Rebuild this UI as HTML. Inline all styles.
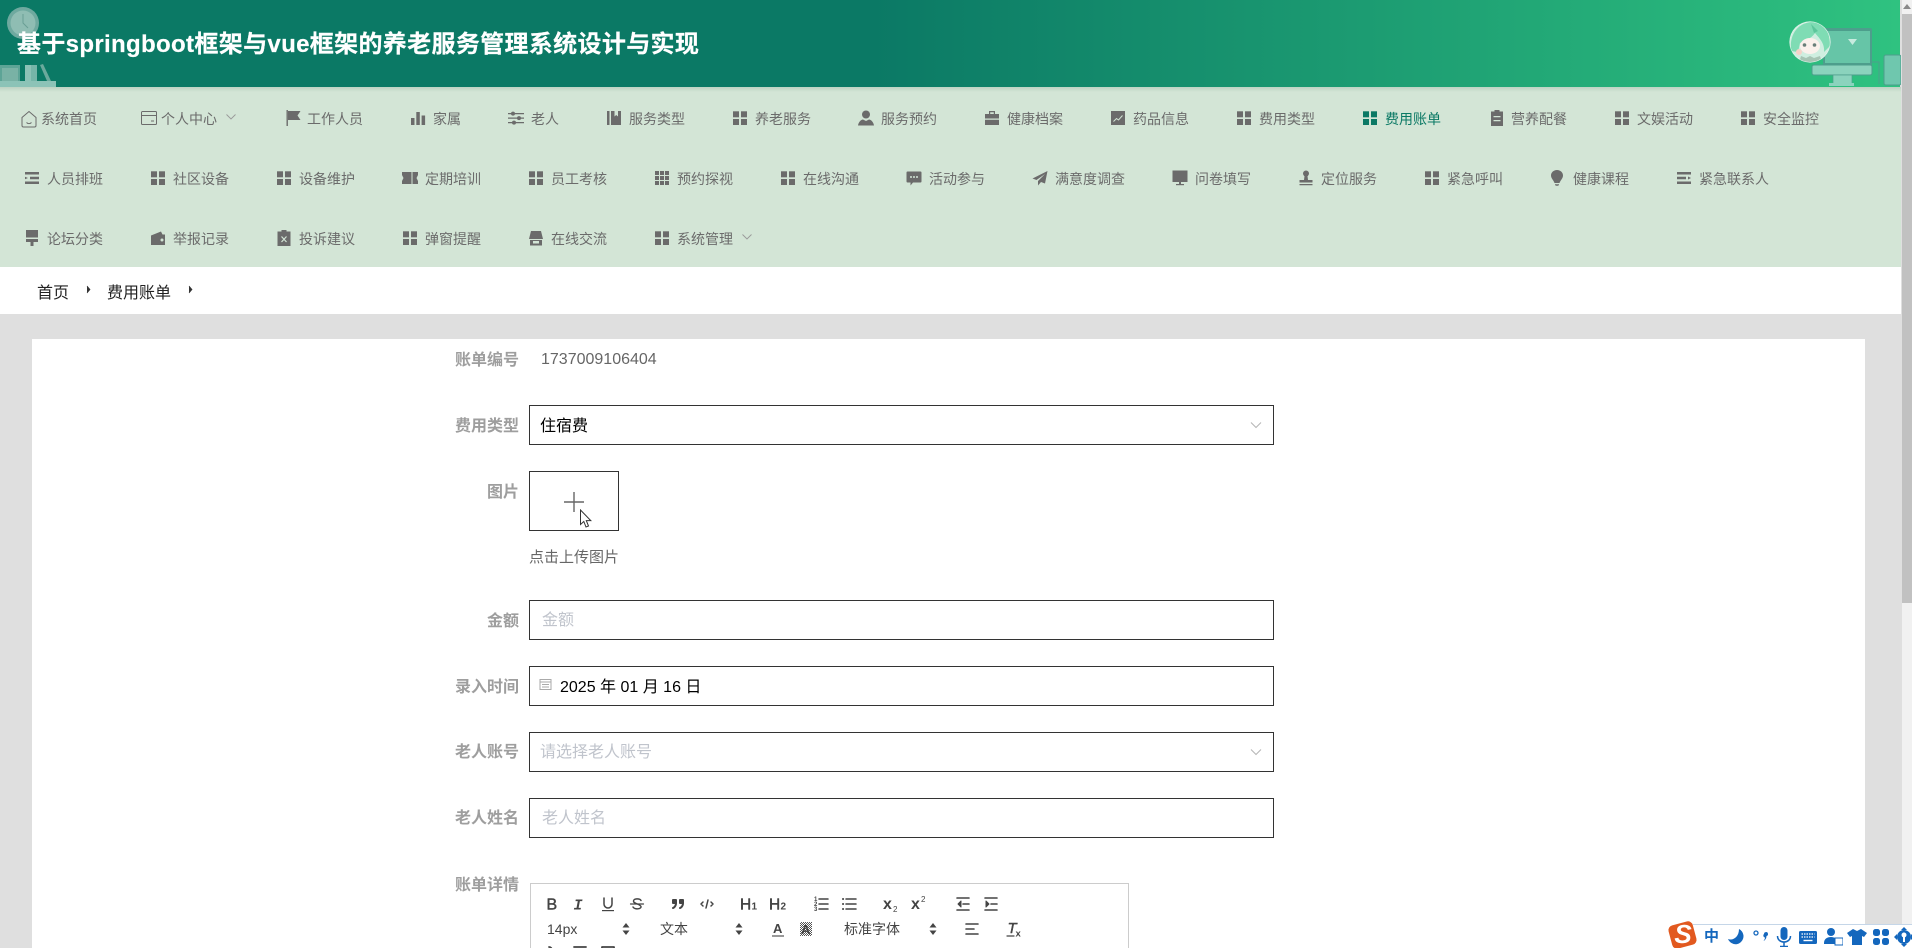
<!DOCTYPE html>
<html lang="zh-CN">
<head>
<meta charset="utf-8">
<title>费用账单</title>
<style>
*{box-sizing:border-box;margin:0;padding:0}
html,body{width:1912px;height:948px;overflow:hidden;background:#dfdfdf}
body{position:relative;font-family:"Liberation Sans","Noto Sans CJK SC",sans-serif;color:#666}
.a{position:absolute}
#hd{left:0;top:0;width:1900px;height:87px;background:linear-gradient(90deg,#0b7965 0,#0b7965 46%,#2fc280 100%)}
#title{left:17px;top:29px;font-size:24px;line-height:32px;font-weight:700;color:#fff;white-space:nowrap;letter-spacing:.34px;-webkit-text-stroke:.2px #fff}
#nav{left:0;top:87px;width:1901px;height:180px;background:linear-gradient(180deg,#bdd3c3 0,#d3e5d6 5px,#d3e5d6 100%)}
.t{position:absolute;font-size:14px;line-height:20px;height:20px;white-space:nowrap;color:#6b6b6b;transform:translateY(1px)}
.i{position:absolute;width:16px;height:16px;fill:#6b6b6b;color:#6b6b6b}
.on{color:#0b7965;fill:#0b7965}
#bc{left:0;top:267px;width:1901px;height:47px;background:#fff}
.b{position:absolute;top:283px;font-size:16px;line-height:22px;color:#222;white-space:nowrap}
#card{left:32px;top:339px;width:1833px;height:609px;background:#fff}
.l{position:absolute;width:100px;left:419px;text-align:right;font-size:16px;line-height:24px;color:#9e9e9e;font-weight:700;white-space:nowrap;margin-top:2px}
.f{position:absolute;left:529px;width:745px;height:40px;border:1px solid #333;background:#fff;font-size:16px;line-height:42px;padding-left:10px;color:#000;white-space:nowrap}
.f.ph{line-height:40px}
.ph{color:#c0c4cc}
.ar{position:absolute;left:1250px;width:12px;height:8px;fill:none;stroke:#b5b5b5;stroke-width:1}
#ed{left:530px;top:883px;width:599px;height:70px;border:1px solid #ccc;background:#fff}
.q{position:absolute;width:18px;height:18px;fill:none;stroke:#444;stroke-width:2;stroke-linecap:round;stroke-linejoin:round}
.q text{stroke:none;fill:#444;font-family:"Liberation Sans",sans-serif}
.q text.m2{stroke:#444;stroke-width:.45px}
.q text.mono{font-family:"Liberation Mono",monospace}
.qt{position:absolute;top:920px;font-size:14px;line-height:18px;color:#444;white-space:nowrap}
.pk{position:absolute;top:923px;width:8px;height:12px;fill:#444}
#st{left:1902px;top:0;width:10px;height:948px;background:#f1f1f1}
#th{left:1902px;top:14px;width:10px;height:589px;background:#c1c1c1}
#ime{left:1693px;top:924px;width:219px;height:24px;background:#fff;border-top:1px solid #c5d6e8}
.m{position:absolute;width:20px;height:20px;top:927px;fill:#1467bd}
</style>
</head>
<body>
<svg width="0" height="0" style="position:absolute">
<defs>
<pattern id="hatch" width="2" height="2" patternUnits="userSpaceOnUse"><rect width="1" height="1" fill="#555"/><rect x="1" y="1" width="1" height="1" fill="#555"/></pattern>
<symbol id="grid" viewBox="0 0 16 16"><rect x="1" y="1.3" width="6" height="6"/><rect x="9" y="1.3" width="6" height="6"/><rect x="1" y="9" width="6" height="6"/><rect x="9" y="9" width="6" height="6"/></symbol>
<symbol id="home" viewBox="0 0 18 18"><path d="M9 1.500L16 7.500V15.500a1.500 1.500 0 0 1-1.500 1.500H3.500A1.500 1.500 0 0 1 2 15.500V7.500Z M6.500 12.500c1.500 1.500 3.500 1.500 5 0" fill="none" stroke="#6b6b6b" stroke-width="1"/></symbol>
<symbol id="wal" viewBox="0 0 18 18"><path d="M2.500 2.500h13a1 1 0 0 1 1 1v11a1 1 0 0 1-1 1h-13a1 1 0 0 1-1-1v-11a1 1 0 0 1 1-1ZM1.500 6.500h15M11 12h3" fill="none" stroke="#6b6b6b" stroke-width="1"/></symbol>
<symbol id="flag" viewBox="0 0 16 16"><path d="M1.500 0h1.400v16H1.500ZM3 1h12.500l-3 4.500 3 4.500H3Z"/></symbol>
<symbol id="bars" viewBox="0 0 16 16"><rect x="1" y="8" width="3.500" height="7"/><rect x="6.300" y="2" width="3.500" height="13"/><rect x="11.600" y="5.500" width="3.500" height="9.500"/></symbol>
<symbol id="sl" viewBox="0 0 16 16"><path d="M0 3h16v1.300H0ZM0 7.500h16v1.300H0ZM0 12h16v1.300H0Z"/><circle cx="5" cy="3.600" r="2"/><circle cx="11" cy="8.100" r="2"/><circle cx="6" cy="12.600" r="2"/></symbol>
<symbol id="bk" viewBox="0 0 16 16"><path d="M1 1h2.500v14H1ZM5 1h10v14H5Z"/><path d="M8.500 1h3.500v5.500L10.200 5 8.500 6.500Z" fill="#d3e5d6"/></symbol>
<symbol id="usr" viewBox="0 0 16 16"><circle cx="8" cy="4.500" r="4"/><path d="M0 15.500c.5-3.500 3-6 5-6l3 1.500 3-1.500c2 0 4.500 2.500 5 6Z"/></symbol>
<symbol id="bag" viewBox="0 0 16 16"><path d="M5 1h6v3H9.800V2.200H6.200V4H5ZM1 4h14v4.500H1ZM1 9.800h14V15H1Z"/></symbol>
<symbol id="chart" viewBox="0 0 16 16"><rect x="1" y="1" width="14" height="14"/><path d="M3.500 11.500l3-3 2 1.500 4-4.500" fill="none" stroke="#d3e5d6" stroke-width="1"/></symbol>
<symbol id="clip" viewBox="0 0 16 16"><path d="M5.500 0h5v1.500H14V16H2V1.500h3.500Z"/><path d="M4.500 6h7v1.300h-7ZM4.500 10h7v1.300h-7Z" fill="#d3e5d6"/></symbol>
<symbol id="list" viewBox="0 0 16 16"><path d="M1 2h14v2.500H1ZM6 6.800h9v2.500H6ZM1 11.500h14V14H1ZM1 6.800l3 1.200-3 1.300Z"/></symbol>
<symbol id="tick" viewBox="0 0 16 16"><path d="M0 2h16v3l-1.500 3 1.500 3v3H0v-3l1.500-3L0 5Z"/><path d="M10 2v12" stroke="#d3e5d6" stroke-width="1"/></symbol>
<symbol id="g9" viewBox="0 0 16 16"><rect x="1" y="1" width="4" height="4"/><rect x="6" y="1" width="4" height="4"/><rect x="11" y="1" width="4" height="4"/><rect x="1" y="6" width="4" height="4"/><rect x="6" y="6" width="4" height="4"/><rect x="11" y="6" width="4" height="4"/><rect x="1" y="11" width="4" height="4"/><rect x="6" y="11" width="4" height="4"/><rect x="11" y="11" width="4" height="4"/></symbol>
<symbol id="chat" viewBox="0 0 16 16"><path d="M1.500 1.500h13a1 1 0 0 1 1 1v9a1 1 0 0 1-1 1H7l-2.500 3v-3H1.500a1 1 0 0 1-1-1v-9a1 1 0 0 1 1-1Z"/><circle cx="5" cy="7" r="1" fill="#d3e5d6"/><circle cx="8" cy="7" r="1" fill="#d3e5d6"/><circle cx="11" cy="7" r="1" fill="#d3e5d6"/></symbol>
<symbol id="pl" viewBox="0 0 16 16"><path d="M15.500 1L.5 8.500l4 1.500L13 4 6 11v4.500l3-3.500 4 1.500Z"/></symbol>
<symbol id="mon" viewBox="0 0 16 16"><rect x=".5" y=".5" width="15" height="11.500"/><rect x="7" y="12" width="2" height="2"/><rect x="4" y="14" width="8" height="1.200"/></symbol>
<symbol id="stamp" viewBox="0 0 16 16"><circle cx="8" cy="3.500" r="3"/><path d="M6.500 6h3l.5 4h4.500v2.500h-13V10H6ZM1.500 14h13v1.300h-13Z"/></symbol>
<symbol id="bulb" viewBox="0 0 16 16"><path d="M8 0c3.500 0 6 2.500 6 5.500 0 3-2.500 4.500-3.500 7.500h-5C4.500 10 2 8.500 2 5.500 2 2.500 4.500 0 8 0ZM6 14h4v.7H6ZM6.500 15.200h3v.8h-3Z"/></symbol>
<symbol id="unf" viewBox="0 0 16 16"><path d="M1 2h14v2.500H1ZM1 6.800h9v2.500H1ZM1 11.500h14V14H1ZM15 8l-3-1.500v3Z"/></symbol>
<symbol id="brush" viewBox="0 0 16 16"><path d="M2 0h12v7.500H2ZM2 9h12v3H9.500v4h-3v-4H2Z"/></symbol>
<symbol id="wf" viewBox="0 0 16 16"><path d="M1 5.500L11 1.500 12.500 4.500H15V15H1Z"/><circle cx="12" cy="10" r="1.500" fill="#d3e5d6"/></symbol>
<symbol id="cx" viewBox="0 0 16 16"><path d="M5.500 0h5v1.500H14.500V16h-13V1.500h4Z"/><path d="M5.500 6.500l5 5.500M10.500 6.500l-5 5.500" stroke="#d3e5d6" stroke-width="1.200" fill="none"/></symbol>
<symbol id="shop" viewBox="0 0 16 16"><path d="M3 1h10l2 8H1Z"/><path d="M2 10h12v5.500H2Z"/><path d="M5 11h6v2.500H5Z" fill="#d3e5d6"/></symbol>
<symbol id="dn" viewBox="0 0 12 8"><path d="M1.500 1.500L6 6 10.500 1.500" fill="none" stroke="#999" stroke-width=".9"/></symbol>
<symbol id="ud" viewBox="0 0 8 12"><path d="M4 0l3.500 4.500H.5ZM4 12L.5 7.500h7Z"/></symbol>
</defs>
</svg>

<div id="hd" class="a"></div>
<svg class="a" style="left:0;top:0" width="70" height="87" viewBox="0 0 70 87">
<circle cx="23" cy="23" r="16" fill="#6fa99f"/><circle cx="23" cy="23" r="12.500" fill="#8fbdb3"/>
<path d="M23 14v9l5 5" stroke="#6a9f95" fill="none"/>
<rect x="0" y="65" width="20" height="16" fill="#5da496"/><rect x="2" y="68" width="16" height="13" fill="#79b2a5"/>
<rect x="25" y="65" width="6" height="16" fill="#8cc2b6"/><rect x="31" y="65" width="6" height="16" fill="#75b5a8"/>
<path d="M40 65l3-1 8 17h-4Z" fill="#6ba99c"/>
<rect x="0" y="81" width="56" height="6" fill="#8cc3b7"/>
</svg>
<div id="title" class="a">基于springboot框架与vue框架的养老服务管理系统设计与实现</div>
<svg class="a" style="left:1805px;top:20px" width="96" height="67" viewBox="1805 20 96 67">
<rect x="1823" y="28" width="49" height="38" rx="2" fill="#4d9e8c"/>
<rect x="1825" y="31" width="45" height="32" fill="#66c5a7"/>
<path d="M1848 39h9l-4.500 6Z" fill="#c7ebdf"/>
<rect x="1812" y="65" width="60" height="10" rx="2" fill="#8bd3bd" stroke="#4d9e8c"/>
<rect x="1833" y="75" width="19" height="9" fill="#8bd3bd" stroke="#4d9e8c" stroke-width=".7"/>
<rect x="1829" y="83" width="25" height="3" fill="#8bd3bd"/>
<path d="M1872 62h7v22" fill="none" stroke="#4d9e8c"/>
<rect x="1884" y="55" width="17" height="30" rx="2" fill="#6fc7ae" stroke="#4d9e8c"/>
</svg>
<svg class="a" style="left:1789px;top:21px" width="42" height="42" viewBox="0 0 42 42">
<defs><clipPath id="av"><circle cx="21" cy="21" r="20"/></clipPath></defs>
<circle cx="21" cy="21" r="20.600" fill="#e8f6ef"/>
<g clip-path="url(#av)">
<rect width="42" height="42" fill="#cfeee0"/>
<path d="M2 30C0 10 12 1 24 1s17 10 17 24l-6 6c1-9-5-14-9-19-4 6-11 8-15 10l-2 9Z" fill="#7fdcb4"/>
<path d="M22 3l3 9 4-2Z" fill="#5cc69b"/>
<ellipse cx="21" cy="25" rx="10" ry="8" fill="#fbf1ec"/>
<circle cx="15.500" cy="24" r="1.800" fill="#6a7f7a"/><circle cx="25.500" cy="24" r="1.800" fill="#6a7f7a"/>
<path d="M12 35l5 2 4-2 4 2 6-2 2 7H10Z" fill="#a7c4b4"/>
<circle cx="10" cy="31" r="3" fill="#f5d2c8"/>
</g>
</svg>

<div id="nav" class="a"></div>

<!-- row 1 -->
<svg class="i" style="left:20px;top:110px;width:18px;height:18px"><use href="#home"/></svg><span class="t" style="left:41px;top:108px">系统首页</span>
<svg class="i" style="left:140px;top:109px;width:18px;height:18px"><use href="#wal"/></svg><span class="t" style="left:161px;top:108px">个人中心</span><svg class="a" style="left:225px;top:113px" width="12" height="8"><use href="#dn"/></svg>
<svg class="i" style="left:285px;top:110px"><use href="#flag"/></svg><span class="t" style="left:307px;top:108px">工作人员</span>
<svg class="i" style="left:410px;top:110px"><use href="#bars"/></svg><span class="t" style="left:433px;top:108px">家属</span>
<svg class="i" style="left:508px;top:110px"><use href="#sl"/></svg><span class="t" style="left:531px;top:108px">老人</span>
<svg class="i" style="left:606px;top:110px"><use href="#bk"/></svg><span class="t" style="left:629px;top:108px">服务类型</span>
<svg class="i" style="left:732px;top:110px"><use href="#grid"/></svg><span class="t" style="left:755px;top:108px">养老服务</span>
<svg class="i" style="left:858px;top:110px"><use href="#usr"/></svg><span class="t" style="left:881px;top:108px">服务预约</span>
<svg class="i" style="left:984px;top:110px"><use href="#bag"/></svg><span class="t" style="left:1007px;top:108px">健康档案</span>
<svg class="i" style="left:1110px;top:110px"><use href="#chart"/></svg><span class="t" style="left:1133px;top:108px">药品信息</span>
<svg class="i" style="left:1236px;top:110px"><use href="#grid"/></svg><span class="t" style="left:1259px;top:108px">费用类型</span>
<svg class="i on" style="left:1362px;top:110px"><use href="#grid"/></svg><span class="t on" style="left:1385px;top:108px">费用账单</span>
<svg class="i" style="left:1489px;top:110px"><use href="#clip"/></svg><span class="t" style="left:1511px;top:108px">营养配餐</span>
<svg class="i" style="left:1614px;top:110px"><use href="#grid"/></svg><span class="t" style="left:1637px;top:108px">文娱活动</span>
<svg class="i" style="left:1740px;top:110px"><use href="#grid"/></svg><span class="t" style="left:1763px;top:108px">安全监控</span>

<!-- row 2 -->
<svg class="i" style="left:24px;top:170px"><use href="#list"/></svg><span class="t" style="left:47px;top:168px">人员排班</span>
<svg class="i" style="left:150px;top:170px"><use href="#grid"/></svg><span class="t" style="left:173px;top:168px">社区设备</span>
<svg class="i" style="left:276px;top:170px"><use href="#grid"/></svg><span class="t" style="left:299px;top:168px">设备维护</span>
<svg class="i" style="left:402px;top:170px"><use href="#tick"/></svg><span class="t" style="left:425px;top:168px">定期培训</span>
<svg class="i" style="left:528px;top:170px"><use href="#grid"/></svg><span class="t" style="left:551px;top:168px">员工考核</span>
<svg class="i" style="left:654px;top:170px"><use href="#g9"/></svg><span class="t" style="left:677px;top:168px">预约探视</span>
<svg class="i" style="left:780px;top:170px"><use href="#grid"/></svg><span class="t" style="left:803px;top:168px">在线沟通</span>
<svg class="i" style="left:906px;top:170px"><use href="#chat"/></svg><span class="t" style="left:929px;top:168px">活动参与</span>
<svg class="i" style="left:1032px;top:170px"><use href="#pl"/></svg><span class="t" style="left:1055px;top:168px">满意度调查</span>
<svg class="i" style="left:1172px;top:170px"><use href="#mon"/></svg><span class="t" style="left:1195px;top:168px">问卷填写</span>
<svg class="i" style="left:1298px;top:170px"><use href="#stamp"/></svg><span class="t" style="left:1321px;top:168px">定位服务</span>
<svg class="i" style="left:1424px;top:170px"><use href="#grid"/></svg><span class="t" style="left:1447px;top:168px">紧急呼叫</span>
<svg class="i" style="left:1549px;top:170px"><use href="#bulb"/></svg><span class="t" style="left:1573px;top:168px">健康课程</span>
<svg class="i" style="left:1676px;top:170px"><use href="#unf"/></svg><span class="t" style="left:1699px;top:168px">紧急联系人</span>

<!-- row 3 -->
<svg class="i" style="left:24px;top:230px"><use href="#brush"/></svg><span class="t" style="left:47px;top:228px">论坛分类</span>
<svg class="i" style="left:150px;top:230px"><use href="#wf"/></svg><span class="t" style="left:173px;top:228px">举报记录</span>
<svg class="i" style="left:276px;top:230px"><use href="#cx"/></svg><span class="t" style="left:299px;top:228px">投诉建议</span>
<svg class="i" style="left:402px;top:230px"><use href="#grid"/></svg><span class="t" style="left:425px;top:228px">弹窗提醒</span>
<svg class="i" style="left:528px;top:230px"><use href="#shop"/></svg><span class="t" style="left:551px;top:228px">在线交流</span>
<svg class="i" style="left:654px;top:230px"><use href="#grid"/></svg><span class="t" style="left:677px;top:228px">系统管理</span><svg class="a" style="left:741px;top:233px" width="12" height="8"><use href="#dn"/></svg>

<div id="bc" class="a"></div>
<span class="b" style="left:37px">首页</span>
<svg class="a" style="left:86px;top:284px" width="6" height="12"><path d="M1 2L4 5.500 1 9" fill="#333" stroke="#333" stroke-width=".7"/></svg>
<span class="b" style="left:107px">费用账单</span>
<svg class="a" style="left:188px;top:284px" width="6" height="12"><path d="M1 2L4 5.500 1 9" fill="#333" stroke="#333" stroke-width=".7"/></svg>

<div id="card" class="a"></div>

<span class="l" style="top:347px">账单编号</span>
<span class="a" style="left:541px;top:348px;font-size:16px;line-height:24px;color:#666">1737009106404</span>

<span class="l" style="top:413px">费用类型</span>
<div class="f" style="top:405px">住宿费</div>
<svg class="ar" style="top:421px" viewBox="0 0 12 8"><path d="M1 1.500L6 6.500 11 1.500"/></svg>

<span class="l" style="top:479px">图片</span>
<div class="a" style="left:529px;top:471px;width:90px;height:60px;border:1px solid #333;background:#fff"></div>
<svg class="a" style="left:564px;top:492px" width="20" height="20"><path d="M10 0v20M0 10h20" stroke="#666" stroke-width="1.400"/></svg>
<svg class="a" style="left:579px;top:509px" width="14" height="20" viewBox="0 0 14 20"><path d="M1.500 1v14.500l3.300-3 2.200 5.500 2.500-1-2.200-5.400h4.500Z" fill="#fff" stroke="#333" stroke-width="1"/></svg>
<span class="a" style="left:529px;top:547px;font-size:15px;line-height:22px;color:#666;white-space:nowrap">点击上传图片</span>

<span class="l" style="top:608px">金额</span>
<div class="f ph" style="top:600px;padding-left:12px">金额</div>

<span class="l" style="top:674px">录入时间</span>
<div class="f" style="top:666px;padding-left:30px">2025 年 01 月 16 日</div>
<svg class="a" style="left:539px;top:678px" width="13" height="13" viewBox="0 0 13 13"><path d="M1 1.500h11v10H1ZM1 4h11M3 6.500h7M3 9h7" fill="none" stroke="#aaa" stroke-width="1"/></svg>

<span class="l" style="top:739px">老人账号</span>
<div class="f ph" style="top:732px">请选择老人账号</div>
<svg class="ar" style="top:748px" viewBox="0 0 12 8"><path d="M1 1.500L6 6.500 11 1.500"/></svg>

<span class="l" style="top:805px">老人姓名</span>
<div class="f ph" style="top:798px;padding-left:12px">老人姓名</div>

<span class="l" style="top:872px">账单详情</span>
<div id="ed" class="a"></div>

<!-- toolbar row 1 -->
<svg class="q" style="left:543px;top:895px" viewBox="0 0 18 18"><text x="3.500" y="14.500" font-size="16" font-weight="400" class="m2">B</text></svg>
<svg class="q" style="left:570px;top:895px" viewBox="0 0 18 18"><text x="3.500" y="14.500" font-size="15" font-weight="700" font-style="italic" class="mono">I</text></svg>
<svg class="q" style="left:599px;top:895px" viewBox="0 0 18 18"><path d="M5 3v6a4 4 0 0 0 8 0V3" stroke-width="1.500"/><rect x="3" y="15" width="12" height="1.200" fill="#444" stroke="none"/></svg>
<svg class="q" style="left:628px;top:895px" viewBox="0 0 18 18"><path d="M13 5.500C12 3.500 6 3 5.500 6c-.4 2.500 6.500 3 7.500 5.500.6 2.500-6 3.500-8 .5" stroke-width="1.400"/><path d="M2.500 9h13" stroke-width="1.200"/></svg>
<svg class="q" style="left:669px;top:895px" viewBox="0 0 18 18"><rect x="4" y="5" width="3" height="3" fill="#444"/><rect x="11" y="5" width="3" height="3" fill="#444"/><path d="M7 8c0 4-3 5-3 5M14 8c0 4-3 5-3 5"/></svg>
<svg class="q" style="left:698px;top:895px" viewBox="0 0 18 18"><path d="M5 7L3 9l2 2M13 7l2 2-2 2M10 5L8 13" stroke-width="1.500"/></svg>
<svg class="q" style="left:740px;top:895px" viewBox="0 0 18 18"><text x="0" y="14.500" font-size="15.500" class="m2">H</text><text x="11.500" y="14.500" font-size="10" font-weight="700">1</text></svg>
<svg class="q" style="left:769px;top:895px" viewBox="0 0 18 18"><text x="0" y="14.500" font-size="15.500" class="m2">H</text><text x="11.500" y="14.500" font-size="10" font-weight="700">2</text></svg>
<svg class="q" style="left:812px;top:895px" viewBox="0 0 18 18"><path d="M7 4h9M7 9h9M7 14h9" stroke-width="1.500"/><text x="2" y="6" font-size="6" font-weight="700">1</text><text x="2" y="11" font-size="6" font-weight="700">2</text><text x="2" y="16" font-size="6" font-weight="700">3</text></svg>
<svg class="q" style="left:840px;top:895px" viewBox="0 0 18 18"><path d="M6 4h10M6 9h10M6 14h10" stroke-width="1.500"/><path d="M3 4h.1M3 9h.1M3 14h.1"/></svg>
<svg class="q" style="left:882px;top:895px" viewBox="0 0 18 18"><text x="1" y="14" font-size="16" font-weight="700">x</text><text x="11" y="17" font-size="8">2</text></svg>
<svg class="q" style="left:910px;top:895px" viewBox="0 0 18 18"><text x="1" y="14" font-size="16" font-weight="700">x</text><text x="11" y="7" font-size="8">2</text></svg>
<svg class="q" style="left:954px;top:895px" viewBox="0 0 18 18"><path d="M3 3h12M9 9h6M3 15h12" stroke-width="1.600"/><path d="M7 6L4 9l3 3Z" fill="#444" stroke-width="1"/></svg>
<svg class="q" style="left:982px;top:895px" viewBox="0 0 18 18"><path d="M3 3h12M9 9h6M3 15h12" stroke-width="1.600"/><path d="M4 6l3 3-3 3Z" fill="#444" stroke-width="1"/></svg>

<!-- toolbar row 2 -->
<span class="qt" style="left:547px">14px</span>
<svg class="pk" style="left:622px" viewBox="0 0 8 12"><use href="#ud"/></svg>
<span class="qt" style="left:660px">文本</span>
<svg class="pk" style="left:735px" viewBox="0 0 8 12"><use href="#ud"/></svg>
<svg class="q" style="left:769px;top:920px" viewBox="0 0 18 18"><text x="4" y="13" font-size="13" font-weight="700">A</text><rect x="3" y="15" width="12" height="2" fill="#999" stroke="none"/></svg>
<svg class="q" style="left:797px;top:920px" viewBox="0 0 18 18"><rect x="3" y="2" width="12" height="14" fill="url(#hatch)" stroke="none"/><text x="4" y="14" font-size="13" font-weight="700">A</text></svg>
<span class="qt" style="left:844px">标准字体</span>
<svg class="pk" style="left:929px" viewBox="0 0 8 12"><use href="#ud"/></svg>
<svg class="q" style="left:963px;top:920px" viewBox="0 0 18 18"><path d="M3 4h12M3 9h8M3 14h12" stroke-width="1.600"/></svg>
<svg class="q" style="left:1005px;top:920px" viewBox="0 0 18 18"><text x="2.500" y="13" font-size="15" font-style="italic" class="m2">T</text><text x="10.500" y="16.500" font-size="9.500" font-weight="700">x</text><path d="M2 16h7" stroke-width="1.200"/></svg>

<!-- toolbar row 3 -->
<svg class="q" style="left:541px;top:944px" viewBox="0 0 18 18"><path d="M8 3a3 3 0 0 1 3 3v2" stroke-width="1.800"/></svg>
<svg class="q" style="left:571px;top:944px" viewBox="0 0 18 18"><path d="M3 3h12" stroke-width="1.800"/></svg>
<svg class="q" style="left:599px;top:944px" viewBox="0 0 18 18"><path d="M3 3h12v12H3Z" stroke-width="1.800"/></svg>

<div id="st" class="a"></div>
<div id="th" class="a"></div>
<svg class="a" style="left:1902px;top:3px" width="10" height="8"><path d="M5 1l4 5H1Z" fill="#8a8a8a"/></svg>

<!-- IME bar -->
<div id="ime" class="a"></div>
<div class="a" style="left:1670px;top:923px;width:25px;height:24px;background:#e2591f;border-radius:5px;transform:rotate(-15deg)"></div>
<span class="a" style="left:1672px;top:919px;width:22px;text-align:center;font-size:26px;line-height:30px;font-weight:700;font-style:italic;color:#fff">S</span>
<span class="a" style="left:1704px;top:927px;font-size:15px;line-height:20px;font-weight:700;color:#1467bd">中</span>
<svg class="m" style="left:1726px" viewBox="0 0 20 20"><path d="M13 2a8 8 0 1 1-11 10c5 2 11-2 11-10Z"/></svg>
<svg class="m" style="left:1751px" viewBox="0 0 20 20"><circle cx="5" cy="6" r="2" fill="none" stroke="#1467bd" stroke-width="1.300"/><path d="M13 7a2 2 0 1 1 2.500 2c0 2-1 4-3 5 1-1.500 1.500-2.500 1.500-3.500A2 2 0 0 1 13 7Z"/></svg>
<svg class="m" style="left:1774px" viewBox="0 0 20 20"><rect x="6.500" y="0" width="7" height="13" rx="3.500"/><path d="M3.500 9c0 8 13 8 13 0M10 15v4M6 19.500h8" fill="none" stroke="#1467bd" stroke-width="1.500"/></svg>
<svg class="m" style="left:1798px" viewBox="0 0 20 20"><rect x="1" y="4" width="18" height="13" rx="1.500"/><path d="M3.500 7h13M3.500 10h13" stroke="#fff" stroke-width="1.300" stroke-dasharray="1.500 1"/><path d="M5.500 13.500h9" stroke="#fff" stroke-width="1.400"/></svg>
<svg class="m" style="left:1823px" viewBox="0 0 20 20"><circle cx="8" cy="5" r="4"/><path d="M1 16c0-4 3-6 7-6 2 0 3 .5 4 1v6H1Z"/><rect x="12" y="11" width="8" height="7" fill="#fff" stroke="#1467bd" stroke-width="1"/></svg>
<svg class="m" style="left:1847px" viewBox="0 0 20 20"><path d="M6 2l4 2 4-2 6 4-3 4-2-1v9H5V9l-2 1-3-4Z"/></svg>
<svg class="m" style="left:1871px" viewBox="0 0 20 20"><rect x="2" y="2" width="7" height="7" rx="2.500"/><rect x="11" y="2" width="7" height="7" rx="2.500"/><rect x="2" y="11" width="7" height="7" rx="2.500"/><rect x="11" y="11" width="7" height="7" rx="2.500"/></svg>
<svg class="m" style="left:1894px" viewBox="0 0 20 20"><circle cx="10" cy="10" r="7"/><path d="M10 0l3 3h-6ZM10 20l-3-3h6ZM0 10l3-3v6ZM20 10l-3 3V7Z"/><circle cx="10" cy="8" r="2.500" fill="#fff"/><path d="M9 10h2v5H9Z" fill="#fff"/></svg>
</body>
</html>
